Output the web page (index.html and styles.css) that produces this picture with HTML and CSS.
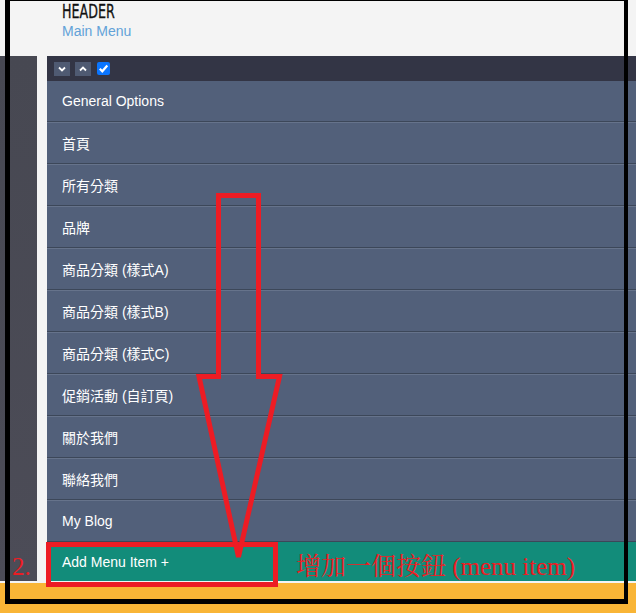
FILE: index.html
```html
<!DOCTYPE html>
<html>
<head>
<meta charset="utf-8">
<link rel="stylesheet" href="styles.css">
</head>
<body>
<div class="header">
  <div class="title"><span>HEADER</span></div>
  <div class="subtitle">Main Menu</div>
</div>
<div class="main">
  <div class="sidebar"></div>
  <div class="strip"></div>
  <div class="panel">
    <div class="toolbar">
      <span class="tbtn"><svg width="8" height="6" viewBox="0 0 8 6"><path d="M1 1.5 L4 4.5 L7 1.5" fill="none" stroke="#fff" stroke-width="1.8"/></svg></span>
      <span class="tbtn"><svg width="8" height="6" viewBox="0 0 8 6"><path d="M1 4.5 L4 1.5 L7 4.5" fill="none" stroke="#fff" stroke-width="1.8"/></svg></span>
      <span class="check"><svg width="13" height="13" viewBox="0 0 13 13"><path d="M2.8 6.8 L5.3 9.3 L10.3 3.6" fill="none" stroke="#fff" stroke-width="2.2"/></svg></span>
    </div>
    <div class="row first">General Options</div>
    <div class="row">首頁</div>
    <div class="row">所有分類</div>
    <div class="row">品牌</div>
    <div class="row">商品分類 (樣式A)</div>
    <div class="row">商品分類 (樣式B)</div>
    <div class="row">商品分類 (樣式C)</div>
    <div class="row">促銷活動 (自訂頁)</div>
    <div class="row">關於我們</div>
    <div class="row">聯絡我們</div>
    <div class="row">My Blog</div>
    <div class="add">Add Menu Item +</div>
  </div>
</div>
<div class="footer"></div>

<div class="frame"></div>
<div class="addbox"></div>
<svg class="arrow" width="636" height="613" viewBox="0 0 636 613">
  <polygon points="218.5,195.5 258.5,195.5 258.5,376.5 279.5,376.5 238.5,557 199,376.5 218.5,376.5" fill="none" stroke="#ed1c24" stroke-width="5" stroke-linejoin="miter"/>
</svg>
<div class="num">2.</div>
<div class="note">增加一個按鈕 (menu item)</div>
</body>
</html>
```
FILE: styles.css
```css
html, body {
  margin: 0;
  padding: 0;
}
body {
  width: 636px;
  height: 613px;
  overflow: hidden;
  background: #f4f4f4;
  font-family: "Liberation Sans", Arial, "Noto Sans CJK TC", sans-serif;
  position: relative;
}
.header {
  height: 56px;
  box-sizing: border-box;
  padding-left: 62px;
  padding-top: 1px;
  background: #f4f4f4;
}
.title {
  height: 21px;
  line-height: 21px;
}
.title span {
  display: inline-block;
  font-family: "DejaVu Sans Condensed", "DejaVu Sans", sans-serif;
  font-size: 19px;
  color: #111;
  -webkit-text-stroke: 0.3px #111;
  transform: scaleX(0.74);
  transform-origin: left center;
}
.subtitle {
  font-size: 14px;
  line-height: 18px;
  color: #62a2d8;
}
.main {
  display: flex;
  height: 525px;
}
.sidebar {
  width: 37px;
  background: linear-gradient(#474852, #4c4c57);
}
.strip {
  width: 10px;
  background: #f4f4f4;
}
.panel {
  flex: 1;
  display: flex;
  flex-direction: column;
}
.toolbar {
  height: 25px;
  background: #333545;
  display: flex;
  align-items: center;
  padding-left: 7px;
  gap: 5px;
}
.tbtn {
  width: 16px;
  height: 14px;
  background: #4f5a72;
  display: flex;
  align-items: center;
  justify-content: center;
}
.check {
  width: 13px;
  height: 13px;
  border-radius: 2px;
  background: #0a75ff;
  margin-left: 1px;
  display: flex;
}
.row {
  height: 42px;
  box-sizing: border-box;
  border-top: 1px solid #66738b;
  border-bottom: 1px solid #3c4759;
  background: #52607a;
  color: #fff;
  font-size: 14px;
  display: flex;
  align-items: center;
  padding-left: 15px;
  padding-bottom: 1px;
}
.row.first {
  height: 41px;
  border-top: none;
  padding-bottom: 0;
}
.add {
  height: 39px;
  background: #128c7a;
  color: #fff;
  font-size: 14px;
  display: flex;
  align-items: center;
  padding-left: 15px;
}
.footer {
  position: absolute;
  left: 0;
  top: 583px;
  width: 636px;
  height: 30px;
  background: #f9b536;
}
.frame {
  position: absolute;
  left: 5px;
  top: -4px;
  width: 614px;
  height: 598px;
  border: 5px solid #000;
  border-right-width: 4px;
}
.addbox {
  position: absolute;
  left: 46px;
  top: 542px;
  width: 222px;
  height: 35px;
  border: 5px solid #ed1c24;
}
.arrow {
  position: absolute;
  left: 0;
  top: 0;
}
.num {
  position: absolute;
  left: 12px;
  top: 552px;
  font-family: "Liberation Serif", serif;
  font-size: 25px;
  line-height: 30px;
  color: #ed1c24;
}
.note {
  position: absolute;
  left: 296px;
  top: 552px;
  font-family: "Liberation Serif", "Noto Serif CJK TC", "Noto Sans CJK TC", serif;
  font-size: 25px;
  line-height: 30px;
  color: #ed1c24;
}
```
